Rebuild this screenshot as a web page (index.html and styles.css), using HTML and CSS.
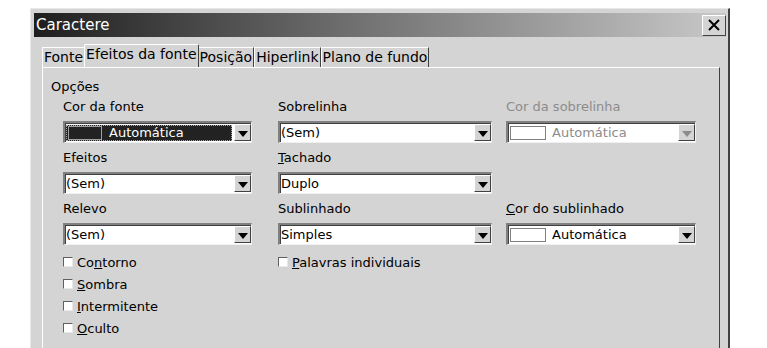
FILE: index.html
```html
<!DOCTYPE html>
<html lang="pt">

<head>
  <meta charset="UTF-8">
  <title>Caractere</title>
  <link rel="stylesheet" href="styles.css">
</head>

<body>
  <div class="window">
    <header class="titlebar">
      <span class="title">Caractere</span>
      <button class="close" type="button">
        <svg width="14" height="14" viewBox="0 0 14 14">
          <path d="M2 2 L12 12 M12 2 L2 12" stroke="#000" stroke-width="2" fill="none" />
        </svg>
      </button>
    </header>

    <nav class="tabs">
      <span class="tab">Fonte</span>
      <span class="tab active">Efeitos da fonte</span>
      <span class="tab">Posição</span>
      <span class="tab">Hiperlink</span>
      <span class="tab">Plano de fundo</span>
    </nav>

    <section class="panel">
      <h2 class="group">Opções</h2>
      <div class="grid">
        <div class="col col-1">
          <label class="label">Cor da fonte</label>
          <div class="select focused">
            <span class="value"><i class="swatch dark"></i>Automática</span>
            <span class="arrow"></span>
          </div>
          <label class="label">Efeitos</label>
          <div class="select">
            <span class="value">(Sem)</span>
            <span class="arrow"></span>
          </div>
          <label class="label">Relevo</label>
          <div class="select">
            <span class="value">(Sem)</span>
            <span class="arrow"></span>
          </div>
          <ul class="checks">
            <li><i class="box"></i><span>Co<u>n</u>torno</span></li>
            <li><i class="box"></i><span><u>S</u>ombra</span></li>
            <li><i class="box"></i><span><u>I</u>ntermitente</span></li>
            <li><i class="box"></i><span><u>O</u>culto</span></li>
          </ul>
        </div>

        <div class="col col-2">
          <label class="label">Sobrelinha</label>
          <div class="select">
            <span class="value">(Sem)</span>
            <span class="arrow"></span>
          </div>
          <label class="label"><u>T</u>achado</label>
          <div class="select">
            <span class="value">Duplo</span>
            <span class="arrow"></span>
          </div>
          <label class="label">Sublinhado</label>
          <div class="select">
            <span class="value">Simples</span>
            <span class="arrow"></span>
          </div>
          <ul class="checks">
            <li><i class="box"></i><span><u>P</u>alavras individuais</span></li>
          </ul>
        </div>

        <div class="col col-3">
          <label class="label disabled">Cor da sobrelinha</label>
          <div class="select disabled">
            <span class="value"><i class="swatch"></i>Automática</span>
            <span class="arrow"></span>
          </div>
          <label class="label hidden">-</label>
          <div class="select hidden"></div>
          <label class="label"><u>C</u>or do sublinhado</label>
          <div class="select">
            <span class="value"><i class="swatch"></i>Automática</span>
            <span class="arrow"></span>
          </div>
        </div>
      </div>
    </section>
  </div>
</body>

</html>
```

FILE: styles.css
```css
html {
  box-sizing: border-box;
  font-family: 'DejaVu Sans', Verdana, sans-serif;
  font-size: 13px;
}

*,
*::after,
*::before {
  box-sizing: inherit;
}

body {
  margin: 0;
  background-color: #fff;
  overflow: hidden;
}

.window {
  margin: 8px 0 0 30px;
  width: 700px;
  height: 360px;
  padding: 4px 2px 0 3px;
  background-color: #d4d4d4;
  border-top: 1px solid #e8e8e8;
  border-left: 1px solid #e8e8e8;
  border-right: 2px solid #404040;
}

.titlebar {
  display: flex;
  align-items: center;
  justify-content: space-between;
  height: 24px;
  padding: 0 0 0 2px;
  background: linear-gradient(to right, #1e1e1e, #6e6e6e 45%, #c8c8c8);
}

.title {
  color: #fff;
  font-size: 15px;
}

.close {
  display: flex;
  align-items: center;
  justify-content: center;
  width: 24px;
  height: 21px;
  padding: 0;
  background-color: #d4d4d4;
  border: 1px solid;
  border-color: #fff #404040 #404040 #fff;
}

.tabs {
  display: flex;
  align-items: flex-end;
  height: 30px;
  margin: 0 0 0 8px;
  font-size: 14px;
}

.tab {
  height: 20px;
  padding: 0 1px;
  line-height: 19px;
  color: #000;
  border-top: 1px solid #fff;
  border-left: 1px solid #fff;
  border-right: 1px solid #404040;
}

.tab.active {
  height: 23px;
  margin: 0 -1px;
  position: relative;
  z-index: 1;
  border-radius: 2px 2px 0 0;
  background-color: #d4d4d4;
}

.panel {
  width: 678px;
  height: 300px;
  margin-left: 8px;
  padding: 11px 0 0 8px;
  border-top: 1px solid #fff;
  border-left: 1px solid #fff;
  border-right: 1px solid #404040;
}

.group {
  margin: 0;
  font-size: 13px;
  font-weight: normal;
  line-height: 16px;
}

.grid {
  display: flex;
  align-items: flex-start;
  padding-left: 12px;
  margin-top: 4px;
}

.col {
  display: flex;
  flex-direction: column;
  flex: none;
}

.col-1 {
  width: 189px;
}

.col-2 {
  width: 214px;
  margin-left: 26px;
}

.col-3 {
  width: 190px;
  margin-left: 14px;
}

.label {
  display: block;
  line-height: 16px;
  margin-bottom: 6px;
}

.select + .label {
  margin-top: 7px;
}

.hidden {
  visibility: hidden;
}

.disabled,
.disabled .value {
  color: #8c8c8c;
}

.select {
  display: flex;
  height: 22px;
  padding: 1px 0 0 1px;
  background-color: #fff;
  border-top: 2px solid #808080;
  border-left: 2px solid #808080;
  border-bottom: 1px solid #f0f0f0;
  border-right: 1px solid #f0f0f0;
  box-shadow: inset 1px 1px 0 #404040;
}

.value {
  flex: 1;
  display: flex;
  align-items: center;
  line-height: 16px;
}

.focused .value {
  margin: 1px 2px 1px 0;
  padding-left: 2px;
  color: #fff;
  background-color: #222;
  outline: 1px dotted #aaa;
  outline-offset: -1px;
}

.swatch {
  display: inline-block;
  width: 36px;
  height: 14px;
  margin: 0 6px 0 1px;
  border: 1px solid #808080;
  background-color: #fff;
}

.swatch.dark {
  width: 34px;
  margin: 0 7px 0 0;
  background-color: #222;
  border-color: #a0a0a0;
}

.arrow {
  width: 17px;
  margin: 0 0 1px;
  background-color: #d4d4d4;
  border-top: 1px solid #fff;
  border-left: 1px solid #fff;
  border-right: 1px solid #404040;
  border-bottom: 1px solid #404040;
  position: relative;
}

.arrow::after {
  content: "";
  position: absolute;
  left: 3px;
  top: 6px;
  border-left: 5px solid transparent;
  border-right: 5px solid transparent;
  border-top: 6px solid #000;
}

.disabled .arrow::after {
  border-top-color: #8c8c8c;
}

.checks {
  list-style: none;
  margin: 6px 0 0;
  padding: 0;
}

.checks li {
  display: flex;
  align-items: center;
  height: 22px;
  gap: 4px;
}

.box {
  display: inline-block;
  width: 10px;
  height: 10px;
  background-color: #fff;
  border-top: 1px solid #606060;
  border-left: 1px solid #606060;
  border-right: 1px solid #e8e8e8;
  border-bottom: 1px solid #e8e8e8;
}
```
